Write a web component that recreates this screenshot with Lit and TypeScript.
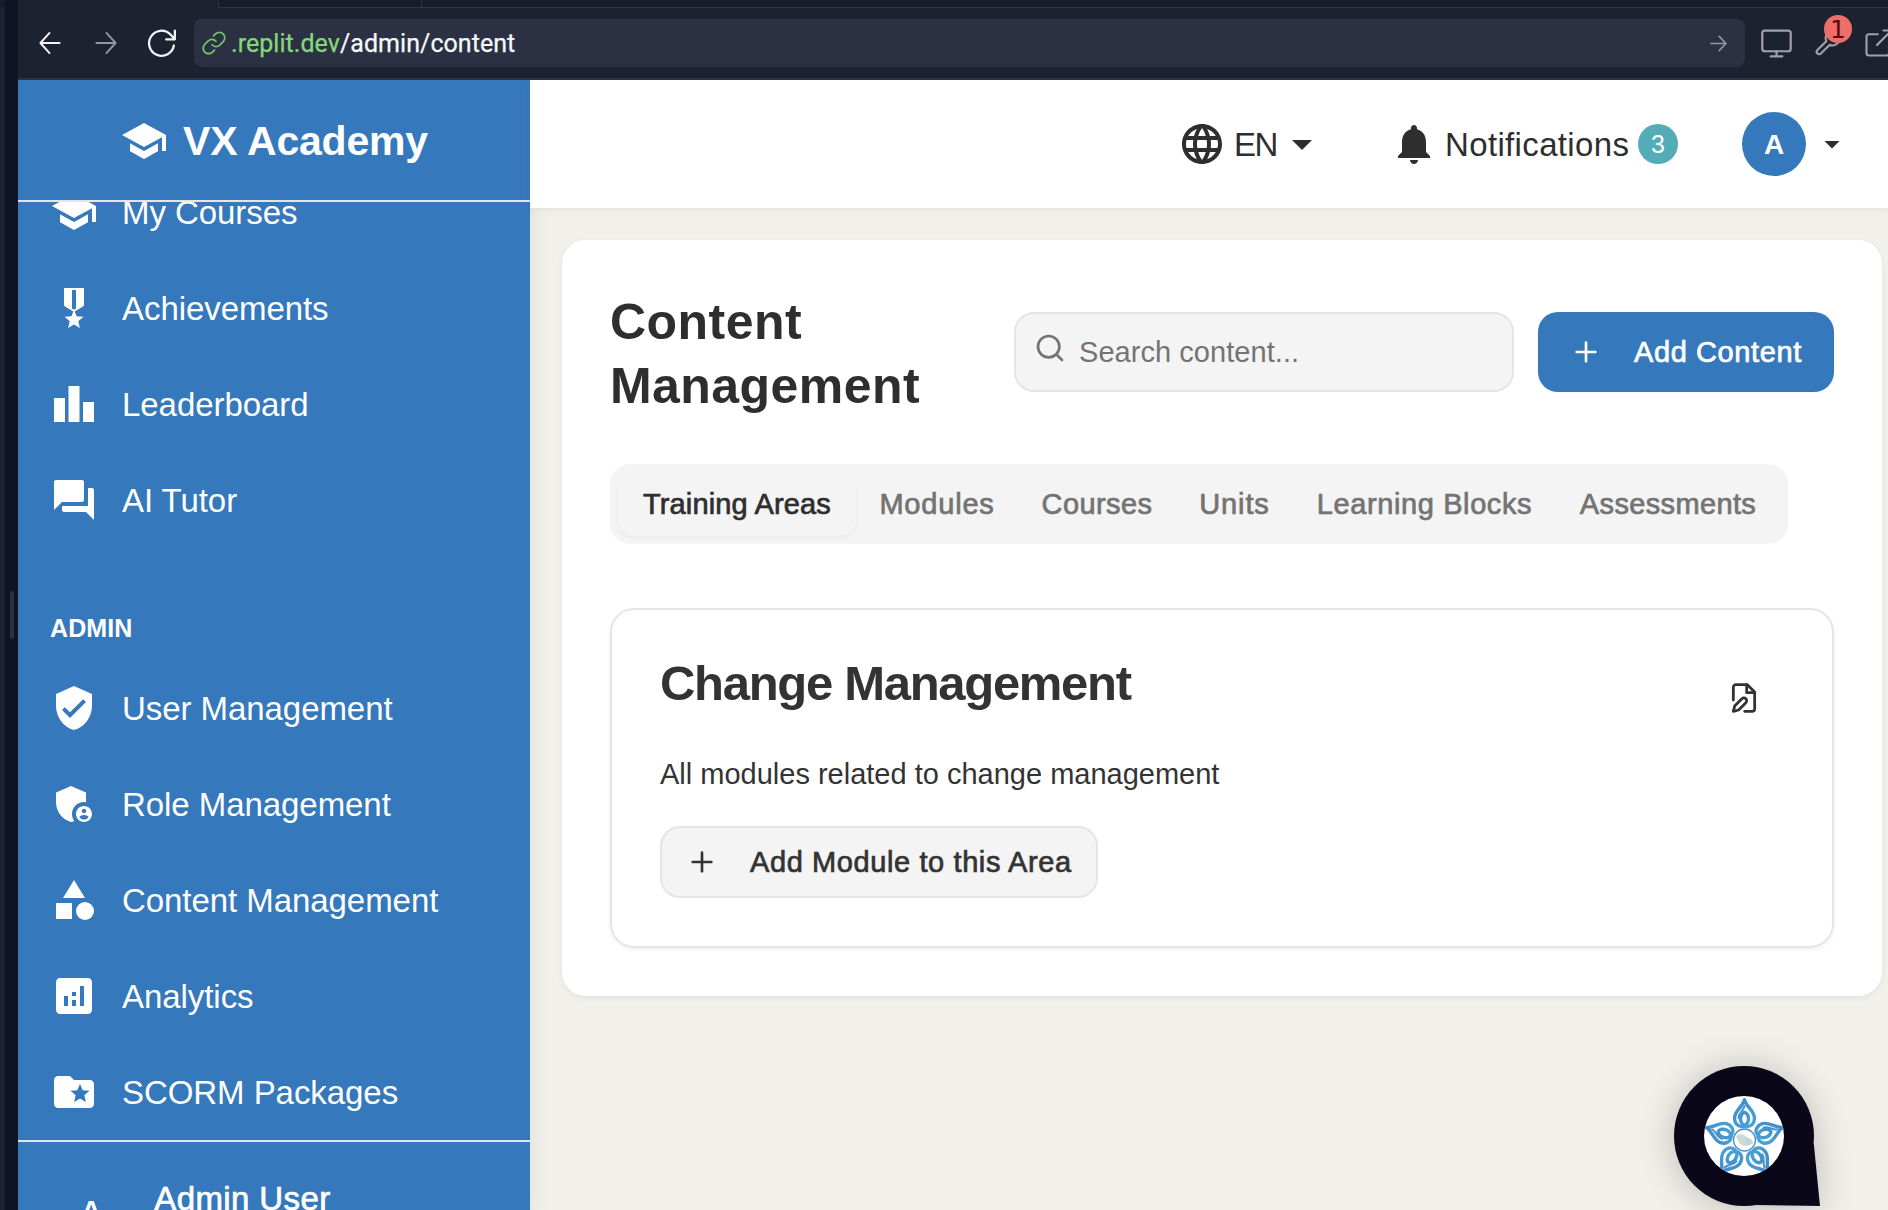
import { LitElement, html, svg, css, SVGTemplateResult } from "lit";
import { customElement, property } from "lit/decorators.js";

const materialIcons: Record<string, SVGTemplateResult> = {
  school: svg`<path d="M5 13.18v4L12 21l7-3.82v-4L12 17l-7-3.82zM12 3L1 9l11 6 9-4.91V17h2V9L12 3z"/>`,
  medal: svg`<path d="M17 10.43V2H7v8.43c0 .35.18.68.49.86l4.18 2.51-.99 2.34-3.41.29 2.59 2.24L9.07 22 12 20.23 14.93 22l-.78-3.33 2.59-2.24-3.41-.29-.99-2.34 4.18-2.51c.3-.18.48-.5.48-.86zM13 12.23l-1 .6-1-.6V3h2v9.23z"/>`,
  leaderboard: svg`<path d="M7.5 21H2V9h5.5v12zm7.25-18h-5.5v18h5.5V3zM22 11h-5.5v10H22V11z"/>`,
  forum: svg`<path d="M21 6h-2v9H6v2c0 .55.45 1 1 1h11l4 4V7c0-.55-.45-1-1-1zm-4 6V3c0-.55-.45-1-1-1H3c-.55 0-1 .45-1 1v14l4-4h10c.55 0 1-.45 1-1z"/>`,
  verified: svg`<path d="M12 1L3 5v6c0 5.55 3.84 10.74 9 12 5.16-1.26 9-6.45 9-12V5l-9-4zm-2 16l-4-4 1.41-1.41L10 14.17l6.59-6.59L18 9l-8 8z"/>`,
  role: svg`<path d="M17 11c.34 0 .67.04 1 .09V6.27L10.5 3 3 6.27v4.91c0 4.54 3.2 8.79 7.5 9.82.55-.13 1.08-.32 1.6-.55-.69-.98-1.1-2.17-1.1-3.45 0-3.31 2.69-6 6-6z"/><path d="M17 13c-2.21 0-4 1.79-4 4s1.79 4 4 4 4-1.79 4-4-1.79-4-4-4zm0 1.38c.62 0 1.12.51 1.12 1.12s-.51 1.12-1.12 1.12-1.12-.51-1.12-1.12.5-1.12 1.12-1.12zm0 5.37c-.93 0-1.74-.46-2.24-1.17.05-.72 1.51-1.08 2.24-1.08s2.19.36 2.24 1.08c-.5.71-1.31 1.17-2.24 1.17z"/>`,
  category: svg`<path d="M12 2l-5.5 9h11z"/><circle cx="17.5" cy="17.5" r="4.5"/><path d="M3 13.5h8v8H3z"/>`,
  analytics: svg`<path d="M19 3H5c-1.1 0-2 .9-2 2v14c0 1.1.9 2 2 2h14c1.1 0 2-.9 2-2V5c0-1.1-.9-2-2-2zM9 17H7v-5h2v5zm4 0h-2v-3h2v3zm0-5h-2v-2h2v2zm4 5h-2V7h2v10z"/>`,
  folder: svg`<path d="M20 6h-8l-2-2H4c-1.1 0-1.99.9-1.99 2L2 18c0 1.1.9 2 2 2h16c1.1 0 2-.9 2-2V8c0-1.1-.9-2-2-2zm-2.06 11L15 15.28 12.06 17l.78-3.33-2.59-2.24 3.41-.29L15 8l1.34 3.14 3.41.29-2.59 2.24.78 3.33z"/>`,
  language: svg`<path d="M11.99 2C6.47 2 2 6.48 2 12s4.47 10 9.99 10C17.52 22 22 17.52 22 12S17.52 2 11.99 2zm6.93 6h-2.95c-.32-1.25-.78-2.45-1.38-3.56 1.84.63 3.37 1.91 4.33 3.56zM12 4.04c.83 1.2 1.48 2.53 1.91 3.96h-3.82c.43-1.43 1.08-2.76 1.91-3.96zM4.26 14C4.1 13.36 4 12.69 4 12s.1-1.36.26-2h3.38c-.08.66-.14 1.32-.14 2 0 .68.06 1.34.14 2H4.26zm.82 2h2.95c.32 1.25.78 2.45 1.38 3.56-1.84-.63-3.37-1.9-4.33-3.56zm2.95-8H5.08c.96-1.66 2.49-2.93 4.33-3.56C8.81 5.55 8.35 6.75 8.03 8zM12 19.96c-.83-1.2-1.48-2.53-1.91-3.96h3.82c-.43 1.43-1.08 2.76-1.91 3.96zM14.34 14H9.66c-.09-.66-.16-1.32-.16-2 0-.68.07-1.35.16-2h4.68c.09.65.16 1.32.16 2 0 .68-.07 1.34-.16 2zm.25 5.56c.6-1.11 1.06-2.31 1.38-3.56h2.95c-.96 1.65-2.49 2.93-4.33 3.56zM16.36 14c.08-.66.14-1.32.14-2 0-.68-.06-1.34-.14-2h3.38c.16.64.26 1.31.26 2s-.1 1.36-.26 2h-3.38z"/>`,
  bell: svg`<path d="M12 22c1.1 0 2-.9 2-2h-4c0 1.1.89 2 2 2zm6-6v-5c0-3.07-1.64-5.64-4.5-6.32V4c0-.83-.67-1.5-1.5-1.5s-1.5.67-1.5 1.5v.68C7.63 5.36 6 7.92 6 11v5l-2 2v1h16v-1l-2-2z"/>`,
  caret: svg`<path d="M7 10l5 5 5-5z"/>`,
};

const lineIcons: Record<string, SVGTemplateResult> = {
  back: svg`<path d="M22.5 12H1.5M11.5 1L1.5 12l10 11"/>`,
  forward: svg`<path d="M1.5 12h21M12.5 1l10 11-10 11"/>`,
  go: svg`<path d="M1.5 12h21M13 2l9.5 10L13 22"/>`,
  reload: svg`<path d="M21.5 14A10 10 0 1 1 18.6 5L22 8.6M22.3 2v7h-7"/>`,
  link: svg`<path d="M10.2 13.6a4.8 4.8 0 0 0 7.1.3l3.2-3.2a5 5 0 0 0-7.1-7.1L11.5 5.4"/><path d="M13.8 10.4a4.8 4.8 0 0 0-7.1-.3l-3.2 3.2a5 5 0 0 0 7.1 7.1l1.9-1.9"/>`,
  monitor: svg`<rect x="1" y="2" width="22" height="16" rx="2"/><path d="M12 18v4M7.5 22h9"/>`,
  wrench: svg`<path d="M14.7 6.3a1 1 0 0 0 0 1.4l1.6 1.6a1 1 0 0 0 1.4 0l3.77-3.77a6 6 0 0 1-7.94 7.94l-7.6 7.6a2.12 2.12 0 0 1-3-3l7.6-7.6a6 6 0 0 1 7.94-7.94z"/>`,
  external: svg`<path d="M20 13v7a2 2 0 0 1-2 2H4a2 2 0 0 1-2-2V7a2 2 0 0 1 2-2h7M10.5 13.5L22 2M15.5 2H22v7"/>`,
  search: svg`<circle cx="11" cy="11" r="8"/><path d="m21 21-4.3-4.3"/>`,
  plus: svg`<path d="M5 12h14M12 5v14"/>`,
  edit: svg`<path d="M4 13.5V4a2 2 0 0 1 2-2h8.5L20 7.5V20a2 2 0 0 1-2 2h-5.5"/><path d="M14 2v6h6"/><path d="M10.42 12.61a2.1 2.1 0 1 1 2.97 2.97L7.95 21 4 22l.99-3.95 5.43-5.44Z"/>`,
};

@customElement("ui-icon")
class UiIcon extends LitElement {
  @property() name = "";
  @property({ type: Number }) size = 48;
  @property({ type: Number }) stroke = 2;

  static styles = css`
    :host { display: block; flex: none; line-height: 0; }
    .fill { fill: currentColor; }
    .line { fill: none; stroke: currentColor; stroke-linecap: round; stroke-linejoin: round; overflow: visible; }
  `;

  render() {
    const filled = materialIcons[this.name];
    return filled
      ? html`<svg class="fill" viewBox="0 0 24 24" width=${this.size} height=${this.size}>${filled}</svg>`
      : html`<svg class="line" viewBox="0 0 24 24" width=${this.size} height=${this.size} stroke-width=${this.stroke}>${lineIcons[this.name]}</svg>`;
  }
}

const base = css`
  * { box-sizing: border-box; }
  :host { display: block; font-family: "Liberation Sans", Arial, sans-serif; }
  .medium { -webkit-text-stroke: 0.7px currentColor; }
`;

@customElement("browser-bar")
class BrowserBar extends LitElement {
  static styles = [base, css`
    :host { height: 80px; background: #1d2231; overflow: hidden; }
    .tabs { display: grid; grid-template-columns: 200px 203px 1fr; height: 8px; }
    .tab { background: #171c29; border-left: 1px solid #2f3547; border-bottom: 1px solid #2f3547; }
    .tab.active { background: #1d2231; border: 0; }
    .toolbar { display: flex; align-items: center; height: 72px; padding-left: 20px; border-bottom: 2px solid #2b3142; color: #f3f4f6; }
    .nav { width: 24px; display: flex; justify-content: center; flex: none; }
    .nav + .nav { margin-left: 32px; }
    .dim { color: #9296a0; }
    .url { display: flex; align-items: center; width: 1551px; height: 48px; margin: 0 16px 0 20px; padding: 0 18px 0 7px; border-radius: 8px; background: #2b3042; flex: none; }
    .address { margin: 0 auto 0 4px; padding-top: 2px; font: 25px/34px Roboto, sans-serif; letter-spacing: .05px; -webkit-text-stroke: .25px currentColor; white-space: pre; color: #f5f9fc; }
    .host { color: #85d97b; }
    .green { color: #72c46d; }
    .tool { flex: none; position: relative; color: #a0a2a9; margin-right: 22px; }
    .count { position: absolute; left: 10px; top: -14px; width: 28px; height: 28px; border-radius: 50%; background: #ee6f69; color: #5d0b0b; font: 25px/29px "DejaVu Sans", sans-serif; text-align: center; }
  `];

  render() {
    return html`
      <div class="tabs"><span class="tab active"></span><span class="tab"></span><span class="tab"></span></div>
      <div class="toolbar">
        <span class="nav"><ui-icon name="back" size="22" stroke="2.1"></ui-icon></span>
        <span class="nav dim"><ui-icon name="forward" size="22" stroke="2.1"></ui-icon></span>
        <span class="nav"><ui-icon name="reload" size="30" stroke="1.8"></ui-icon></span>
        <div class="url">
          <ui-icon class="green" name="link" size="26" stroke="1.6"></ui-icon>
          <span class="address"><span class="host">.replit.dev</span>/admin/content</span>
          <ui-icon class="dim" name="go" size="17" stroke="2.4"></ui-icon>
        </div>
        <span class="tool"><ui-icon name="monitor" size="31" stroke="1.7"></ui-icon></span>
        <span class="tool"><ui-icon name="wrench" size="28" stroke="1.8"></ui-icon><span class="count">1</span></span>
        <span class="tool"><ui-icon name="external" size="30" stroke="1.7"></ui-icon></span>
      </div>`;
  }
}

@customElement("side-bar")
class SideBar extends LitElement {
  static styles = [base, css`
    :host { display: flex; flex-direction: column; background: #3578bc; color: #fff; box-shadow: 0 20px 30px -6px rgba(0,0,0,.1), 0 8px 12px -8px rgba(0,0,0,.1); overflow: hidden; }
    .brand { display: flex; justify-content: center; align-items: center; gap: 15px; height: 122px; padding-top: 2px; border-bottom: 2px solid #e5e5e5; font: bold 41px/48px "Liberation Sans", sans-serif; letter-spacing: -.2px; flex: none; }
    .scroll { height: 938px; overflow: hidden; flex: none; }
    .list { margin-top: -38px; }
    .item { display: flex; align-items: center; gap: 24px; height: 96px; padding-left: 32px; font-size: 33px; letter-spacing: -.06px; }
    .item span { padding-top: 1px; }
    .heading { height: 112px; padding: 64px 0 0 32px; font: bold 25px/32px "Liberation Sans", sans-serif; letter-spacing: .1px; }
    .user { display: flex; align-items: flex-start; border-top: 2px solid #e5e5e5; padding: 37px 0 0 63px; gap: 53px; height: 130px; flex: none; }
    .initial { font: bold 28px/40px "Liberation Sans", sans-serif; margin-top: 12px; }
    .name { font-size: 33px; line-height: 40px; letter-spacing: .4px; }
  `];

  private main = [["school", "My Courses"], ["medal", "Achievements"], ["leaderboard", "Leaderboard"], ["forum", "AI Tutor"]];
  private admin = [["verified", "User Management"], ["role", "Role Management"], ["category", "Content Management"], ["analytics", "Analytics"], ["folder", "SCORM Packages"]];

  private item([icon, label]: string[]) {
    return html`<div class="item"><ui-icon name=${icon}></ui-icon><span>${label}</span></div>`;
  }

  render() {
    return html`
      <div class="brand"><ui-icon name="school"></ui-icon><span>VX Academy</span></div>
      <div class="scroll"><div class="list">
        ${this.main.map((i) => this.item(i))}
        <div class="heading">ADMIN</div>
        ${this.admin.map((i) => this.item(i))}
      </div></div>
      <div class="user"><span class="initial">A</span><span class="name medium">Admin User</span></div>`;
  }
}

@customElement("top-bar")
class TopBar extends LitElement {
  static styles = [base, css`
    :host { display: flex; justify-content: flex-end; align-items: center; gap: 64px; height: 128px; padding-right: 38px; background: #fff; color: #2e2e2e; font-size: 33px; box-shadow: 0 2px 6px rgba(0,0,0,.06); position: relative; }
    .group { display: flex; align-items: center; }
    .lang { width: 44px; margin-left: 8px; letter-spacing: -1.4px; }
    .label { width: 185px; margin-left: 7px; letter-spacing: .35px; }
    .lang, .label { padding-top: 1px; }
    .badge { width: 40px; height: 40px; margin-left: 8px; border-radius: 50%; background: #54adb6; color: #fff; font-size: 25px; line-height: 41px; text-align: center; }
    .avatar { width: 64px; height: 64px; margin-right: 8px; border-radius: 50%; background: #3578bc; color: #fff; font-weight: bold; font-size: 28px; line-height: 65px; text-align: center; }
  `];

  render() {
    return html`
      <div class="group"><ui-icon name="language"></ui-icon><span class="lang">EN</span><ui-icon name="caret"></ui-icon></div>
      <div class="group"><ui-icon name="bell"></ui-icon><span class="label">Notifications</span><span class="badge">3</span></div>
      <div class="group"><span class="avatar">A</span><ui-icon name="caret" size="36"></ui-icon></div>`;
  }
}

@customElement("content-panel")
class ContentPanel extends LitElement {
  static styles = [base, css`
    :host { height: 756px; padding: 48px; border-radius: 24px; background: #fff; color: #2e2e2e; box-shadow: 0 2px 6px rgba(0,0,0,.06); }
    .head { display: flex; align-items: center; height: 128px; }
    h1 { margin: 4px auto 0 0; width: 330px; font-size: 50px; line-height: 64px; letter-spacing: .45px; }
    .search { display: flex; align-items: center; gap: 13px; width: 500px; height: 80px; padding-left: 18px; border: 2px solid #e5e5e5; border-radius: 20px; background: #f4f4f4; color: #737373; font-size: 29px; letter-spacing: .05px; }
    .search ui-icon { margin-top: -8px; }
    .search span, .add span, .module span { padding-top: 1px; }
    .add { display: flex; align-items: center; gap: 32px; width: 296px; height: 80px; margin-left: 24px; padding-left: 32px; border-radius: 20px; background: #3578bc; color: #fff; font-size: 29px; letter-spacing: .6px; white-space: nowrap; }
    .tabs { display: grid; grid-template-columns: 238px 162px 158px 117px 263px 224px; width: 1178px; height: 80px; margin-top: 48px; padding: 8px; border-radius: 20px; background: #f4f4f4; color: #737373; font-size: 29px; line-height: 65px; text-align: center; white-space: nowrap; }
    .tab { border-radius: 16px; letter-spacing: var(--track); height: 64px; }
    .tab.active { color: #2e2e2e; box-shadow: 0 2px 4px rgba(0,0,0,.05); }
    .area { display: flex; justify-content: space-between; height: 340px; margin-top: 64px; padding: 40px 72px 0 48px; border: 2px solid #e5e5e5; border-radius: 24px; box-shadow: 0 2px 4px rgba(0,0,0,.05); color: #333; }
    h2 { margin: 0; font-size: 49px; line-height: 66px; letter-spacing: -1.3px; }
    p { margin: 38px 0 0; font-size: 29px; line-height: 40px; letter-spacing: 0; }
    .module { display: flex; align-items: center; gap: 32px; width: 438px; height: 72px; margin-top: 32px; padding-left: 24px; border: 2px solid #e5e5e5; border-radius: 20px; background: #f4f4f4; font-size: 29px; letter-spacing: .6px; white-space: nowrap; }
    .edit { margin-top: 32px; }
  `];

  private tabs: [string, number][] = [["Training Areas", 0.15], ["Modules", 0.8], ["Courses", 0.4], ["Units", 0.9], ["Learning Blocks", 0.6], ["Assessments", 0.35]];

  render() {
    return html`
      <div class="head">
        <h1>Content Management</h1>
        <div class="search"><ui-icon name="search" size="32"></ui-icon><span>Search content...</span></div>
        <div class="add medium"><ui-icon name="plus" size="32"></ui-icon><span>Add Content</span></div>
      </div>
      <div class="tabs medium">
        ${this.tabs.map(([label, track], i) => html`<span class="tab ${i === 0 ? "active" : ""}" style="--track:${track}px">${label}</span>`)}
      </div>
      <div class="area">
        <div>
          <h2>Change Management</h2>
          <p>All modules related to change management</p>
          <div class="module medium"><ui-icon name="plus" size="32"></ui-icon><span>Add Module to this Area</span></div>
        </div>
        <ui-icon class="edit" name="edit" size="32" stroke="2.1"></ui-icon>
      </div>`;
  }
}

@customElement("chat-launcher")
class ChatLauncher extends LitElement {
  static styles = css`
    :host { display: block; line-height: 0; }
    .bubble { overflow: visible; filter: drop-shadow(0 2px 18px rgba(0,0,0,.22)); }
    .stroke { fill: none; stroke-linecap: round; }
  `;

  render() {
    const petal = svg`
      <path stroke-width="3.4" d="M0 -40C-2 -33 -10 -29 -10 -22C-10 -17 -7 -13.5 -3 -13.5C1 -13.5 4 -17 4 -21C4 -25 2 -27.5 0 -27.5"/>
      <path stroke-width="3.4" d="M0 -40C2 -33 10 -29 10 -22C10 -17 7 -13.5 3 -13.5C-1 -13.5 -4 -17 -4 -21C-4 -25 -2 -27.5 0 -27.5"/>
      <path stroke-width="2" d="M0 -34C-1 -29 -6 -27 -6 -22"/>`;
    return html`<svg class="bubble" width="146" height="140" viewBox="0 0 146 140">
      <defs>
        <clipPath id="disc"><circle cx="70" cy="70" r="40"/></clipPath>
        <linearGradient id="blue" gradientUnits="userSpaceOnUse" x1="-12" y1="-40" x2="12" y2="-12"><stop offset="0" stop-color="#3f86c4"/><stop offset="1" stop-color="#4ba6dc"/></linearGradient>
        <linearGradient id="map"><stop offset="0" stop-color="#d8cfe0"/><stop offset=".4" stop-color="#c9dfd0"/><stop offset=".7" stop-color="#b4d3e6"/><stop offset="1" stop-color="#dce4b8"/></linearGradient>
      </defs>
      <circle cx="70" cy="70" r="70" fill="#090718"/>
      <path fill="#090718" d="M139.8 78L146 140L82 139L70 70Z"/>
      <circle cx="70" cy="70" r="40" fill="#fff"/>
      <g clip-path="url(#disc)"><g transform="translate(70.5 74)" stroke="url(#blue)" class="stroke">
        ${[0, 72, 144, 216, 288].map((a) => svg`<g transform="rotate(${a})">${petal}</g>`)}
      </g></g>
      <circle cx="70.5" cy="74" r="11" fill="#fff" stroke="#4a8fca" stroke-width="1.3"/>
      <path fill="url(#map)" d="M62 70l4-2 4 1 4 3 3 1 3 4-4 2-6 1-4-2-3-5z"/>
    </svg>`;
  }
}

@customElement("app-root")
class AppRoot extends LitElement {
  static styles = [base, css`
    :host { display: grid; grid-template-columns: 18px 1870px; width: 1888px; height: 1210px; overflow: hidden; position: relative; background: #f1f0eb; }
    .rail { display: flex; align-items: center; height: 1210px; background: #0e1423; }
    .edge { align-self: stretch; width: 5px; background: #1d2231; border-top: 7px solid #171c29; }
    .grip { width: 4px; height: 48px; margin: 20px 0 0 5px; border-radius: 2px; background: #2b3042; }
    .window { display: grid; grid-template-rows: 80px 1130px; min-width: 0; height: 1210px; overflow: hidden; }
    .body { display: grid; grid-template-columns: 512px 1358px; overflow: hidden; }
    .page { padding: 32px 6px 0 32px; }
    .chat { position: absolute; left: 1674px; top: 1066px; }
  `];

  render() {
    return html`
      <div class="rail"><span class="edge"></span><span class="grip"></span></div>
      <div class="window">
        <browser-bar></browser-bar>
        <div class="body">
          <side-bar></side-bar>
          <main><top-bar></top-bar><div class="page"><content-panel></content-panel></div></main>
        </div>
      </div>
      <chat-launcher class="chat"></chat-launcher>`;
  }
}
